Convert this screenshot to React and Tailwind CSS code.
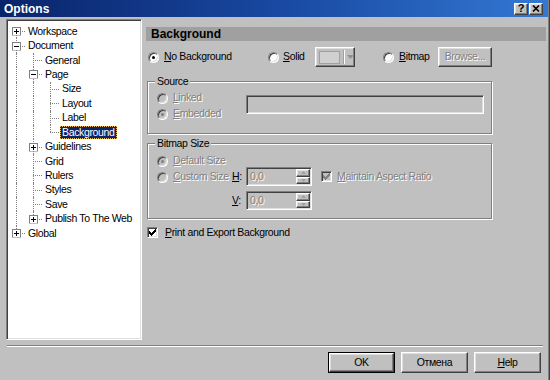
import React from "react";

const tree = [
  { label: "Workspace", guides: [], first: true, box: "+" },
  { label: "Document", guides: [], box: "-" },
  { label: "General", guides: [true] },
  { label: "Page", guides: [true], box: "-" },
  { label: "Size", guides: [true, true] },
  { label: "Layout", guides: [true, true] },
  { label: "Label", guides: [true, true] },
  { label: "Background", guides: [true, true], last: true, selected: true },
  { label: "Guidelines", guides: [true], box: "+" },
  { label: "Grid", guides: [true] },
  { label: "Rulers", guides: [true] },
  { label: "Styles", guides: [true] },
  { label: "Save", guides: [true] },
  { label: "Publish To The Web", guides: [true], last: true, box: "+" },
  { label: "Global", guides: [], last: true, box: "+" },
];

function Expander({ plus }) {
  return (
    <svg width="9" height="9" className="absolute left-[4px] top-1/2 -translate-y-1/2" shapeRendering="crispEdges">
      <rect x="0.5" y="0.5" width="8" height="8" fill="#fff" stroke="#808080" />
      <path d="M2 4.5h5" stroke="#000" />
      {plus && <path d="M4.5 2v5" stroke="#000" />}
    </svg>
  );
}

function TreeRow({ item }) {
  return (
    <div className="flex items-center h-[14.43px] whitespace-nowrap">
      {item.guides.map((g, i) => (
        <div key={i} className="relative w-[17px] h-full shrink-0">
          {g && <span className="absolute left-[8px] top-0 bottom-0 border-l border-dotted border-[#808080]" />}
        </div>
      ))}
      <div className="relative w-[17px] h-full shrink-0">
        <span
          className={
            item.first
              ? "absolute left-[8px] top-1/2 bottom-0 border-l border-dotted border-[#808080]"
              : item.last
              ? "absolute left-[8px] top-0 h-1/2 border-l border-dotted border-[#808080]"
              : "absolute left-[8px] top-0 bottom-0 border-l border-dotted border-[#808080]"
          }
        />
        <span className="absolute left-[8px] right-0 top-1/2 border-t border-dotted border-[#808080]" />
        {item.box && <Expander plus={item.box === "+"} />}
      </div>
      <span
        className={
          item.selected
            ? "ml-[1px] px-[2px] h-[13px] leading-[13px] bg-[#0a246a] text-white outline-1 outline-dotted outline-[#f0c060] -outline-offset-1"
            : "ml-[1px] px-[2px] h-[13px] leading-[13px] text-black"
        }
      >
        {item.label}
      </span>
    </div>
  );
}

function Radio({ checked, disabled }) {
  return (
    <span
      className={
        "relative inline-block w-[11px] h-[11px] shrink-0 rounded-full border border-t-[#808080] border-l-[#808080] border-b-white border-r-white shadow-[inset_1px_1px_0_#404040,inset_-1px_-1px_0_#dfdfdf] " +
        (disabled ? "bg-[#c0c0c0]" : "bg-white")
      }
    >
      {checked && (
        <span
          className={
            "absolute left-[3px] top-[3px] w-[3px] h-[3px] rounded-full " +
            (disabled ? "bg-[#808080]" : "bg-black")
          }
        />
      )}
    </span>
  );
}

function Check({ checked, disabled }) {
  return (
    <span
      className={
        "relative inline-flex items-center justify-center w-[11px] h-[11px] shrink-0 border border-t-[#808080] border-l-[#808080] border-b-white border-r-white shadow-[inset_1px_1px_0_#404040,inset_-1px_-1px_0_#dfdfdf] " +
        (disabled ? "bg-[#c0c0c0]" : "bg-white")
      }
    >
      {checked && (
        <svg width="7" height="7" viewBox="0 0 7 7" shapeRendering="crispEdges">
          <path d="M0 2h1v1h1v1h1V3h1V2h1V1h1V0h1v3H6v1H5v1H4v1H3v1H2V6H1V5H0z" fill={disabled ? "#808080" : "#000"} />
        </svg>
      )}
    </span>
  );
}

const dis = "whitespace-nowrap text-[#808080] [text-shadow:1px_1px_0_#fff]";
const raised =
  "bg-[#c0c0c0] border border-t-white border-l-white border-r-[#404040] border-b-[#404040] shadow-[inset_-1px_-1px_0_#808080,inset_1px_1px_0_#dfdfdf]";
const sunken =
  "border border-t-[#808080] border-l-[#808080] border-b-white border-r-white shadow-[inset_1px_1px_0_#404040,inset_-1px_-1px_0_#dfdfdf]";
const etched = "border border-[#808080] shadow-[inset_1px_1px_0_#fff,1px_1px_0_#fff]";

function U({ children }) {
  return <span className="underline underline-offset-1">{children}</span>;
}

function Spin({ value }) {
  return (
    <div className={"relative flex items-center w-[66px] h-[19px] bg-[#c0c0c0] " + sunken}>
      <span className={"pl-[3px] " + dis}>{value}</span>
      <div className="ml-auto mr-[1px] flex flex-col w-[14px] h-[15px]">
        <div className={"flex-1 flex items-center justify-center " + raised}>
          <svg width="5" height="3"><path d="M2.5 0L5 3H0z" fill="#a0a0a0" /></svg>
        </div>
        <div className={"flex-1 flex items-center justify-center " + raised}>
          <svg width="5" height="3"><path d="M0 0h5L2.5 3z" fill="#a0a0a0" /></svg>
        </div>
      </div>
    </div>
  );
}

function Button({ children, def }) {
  return (
    <div className={def ? "w-[67px] h-[21px] border border-black" : "w-[67px] h-[21px]"}>
      <div className={"w-full h-full flex items-center justify-center " + raised}>{children}</div>
    </div>
  );
}

export default function App() {
  return (
    <div className="w-[550px] h-[380px] overflow-hidden bg-[#c0c0c0] flex flex-col font-['Liberation_Sans',Arial,sans-serif] text-[10.5px] tracking-[-0.35px] text-black shadow-[inset_-1px_0_0_#404040,inset_-2px_0_0_#808080]">
      {/* title bar */}
      <div className="h-[17px] mr-[2px] flex items-center bg-gradient-to-r from-[#0a246a] via-[#1848a0] to-[#3478d4] pl-[4px] pr-[5px]">
        <span className="font-bold text-white text-[12px] tracking-normal">Options</span>
        <div className="ml-auto flex gap-[1px]">
          <div className={"w-[14px] h-[12px] flex items-center justify-center font-bold text-[11px] leading-none " + raised}>?</div>
          <div className={"w-[14px] h-[12px] flex items-center justify-center " + raised}>
            <svg width="8" height="7" viewBox="0 0 8 7">
              <path d="M1 0.5l6 6M7 0.5l-6 6" stroke="#000" strokeWidth="1.6" />
            </svg>
          </div>
        </div>
      </div>

      {/* body */}
      <div className="flex pt-[2px] pl-[6px]">
        <div className="w-[136px] h-[321px] bg-white border border-t-[#808080] border-l-[#808080] border-r-white border-b-white shadow-[inset_1px_1px_0_#404040,inset_-1px_-1px_0_#dfdfdf] pt-[4px] pl-[1px]">
          {tree.map((t) => (
            <TreeRow key={t.label} item={t} />
          ))}
        </div>

        <div className="ml-[4px] w-[400px] pt-[8px] flex flex-col whitespace-nowrap">
          <div className="h-[14px] bg-[#a0a0a0] pl-[5px] font-bold text-[12px] tracking-normal leading-[14px]">Background</div>

          <div className="mt-[6px] h-[20px] flex items-center pl-[2px]">
            <div className="w-[120px] flex items-center gap-[5px]">
              <Radio checked />
              <span>
                <U>N</U>o Background
              </span>
            </div>
            <div className="w-[47px] flex items-center gap-[4px]">
              <Radio />
              <span>
                <U>S</U>olid
              </span>
            </div>
            <div className={"w-[40px] h-[20px] flex items-center pl-[3px] " + raised}>
              <span className="w-[21px] h-[13px] bg-[#d0d0d0] border border-[#a0a0a0]" />
              <span className="ml-[3px] h-[14px] border-l border-[#a0a0a0] border-r border-r-white" />
              <svg width="7" height="4" className="ml-[2px]">
                <path d="M0 0h7L3.5 4z" fill="#909090" />
              </svg>
            </div>
            <div className="ml-[28px] w-[55px] flex items-center gap-[5px]">
              <Radio />
              <span>
                <U>B</U>itmap
              </span>
            </div>
            <div className={"w-[54px] h-[20px] flex items-center justify-center " + raised}>
              <span className={dis}>Browse...</span>
            </div>
          </div>

          {/* Source */}
          <div className={"relative mt-[14px] ml-[1px] w-[345px] h-[53px] flex items-start " + etched}>
            <span className="absolute -top-[8px] left-[7px] px-[2px] bg-[#c0c0c0]">Source</span>
            <div className="w-[98px] pl-[9px] pt-[8px] flex flex-col">
              <div className="h-[16px] flex items-center gap-[5px]">
                <Radio disabled />
                <span className={dis}>
                  <U>L</U>inked
                </span>
              </div>
              <div className="h-[16px] flex items-center gap-[5px]">
                <Radio checked disabled />
                <span className={dis}>
                  <U>E</U>mbedded
                </span>
              </div>
            </div>
            <div className={"mt-[13px] w-[238px] h-[19px] bg-[#c0c0c0] " + sunken} />
          </div>

          {/* Bitmap size */}
          <div className={"relative mt-[9px] ml-[1px] w-[345px] h-[76px] flex items-start " + etched}>
            <span className="absolute -top-[8px] left-[7px] px-[2px] bg-[#c0c0c0]">Bitmap Size</span>
            <div className="w-[84px] shrink-0 pl-[9px] pt-[9px] flex flex-col">
              <div className="h-[16px] flex items-center gap-[5px]">
                <Radio checked disabled />
                <span className={dis}>
                  <U>D</U>efault Size
                </span>
              </div>
              <div className="h-[16px] flex items-center gap-[5px]">
                <Radio disabled />
                <span className={dis}>
                  <U>C</U>ustom Size
                </span>
              </div>
            </div>
            <div className="pt-[23px] flex flex-col gap-[5px]">
              <div className="flex items-center">
                <span className="w-[14px]">
                  <U>H</U>:
                </span>
                <Spin value="0,0" />
              </div>
              <div className="flex items-center">
                <span className="w-[14px]">
                  <U>V</U>:
                </span>
                <Spin value="0,0" />
              </div>
            </div>
            <div className="pt-[23px] ml-[9px]">
              <div className="h-[19px] flex items-center gap-[5px]">
                <Check checked disabled />
                <span className={dis}>
                  <U>M</U>aintain Aspect Ratio
                </span>
              </div>
            </div>
          </div>

          <div className="mt-[7px] h-[13px] flex items-center gap-[7px] ml-[1px]">
            <Check checked />
            <span>
              <U>P</U>rint and Export Background
            </span>
          </div>
        </div>
      </div>

      {/* separator */}
      <div className="mt-[5px] ml-[7px] w-[536px] h-[2px] border-t border-[#808080] border-b border-b-white" />

      {/* buttons */}
      <div className="mt-[5px] flex justify-end gap-[6px] pr-[9px]">
        <Button def>OK</Button>
        <Button>Отмена</Button>
        <Button>
          <span>
            <U>H</U>elp
          </span>
        </Button>
      </div>
    </div>
  );
}
